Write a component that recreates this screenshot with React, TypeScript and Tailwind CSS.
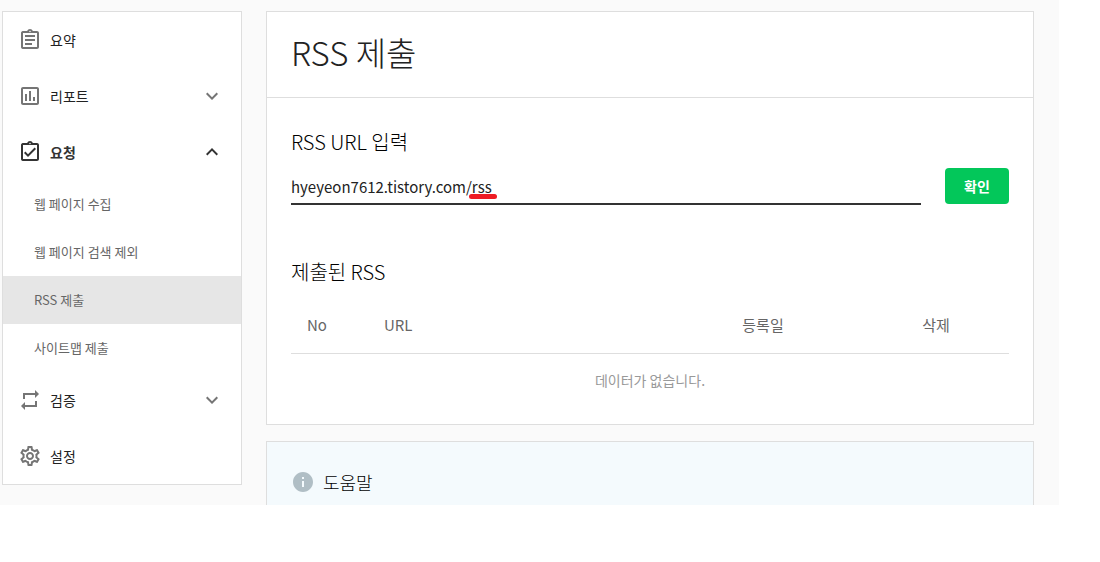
import { useState } from "react";
import type { IconType } from "react-icons";
import {
  MdExpandLess,
  MdExpandMore,
  MdInfo,
  MdOutlineAssessment,
  MdOutlineAssignment,
  MdOutlineAssignmentTurnedIn,
  MdOutlineSettings,
  MdRepeat,
} from "react-icons/md";

type MenuItem = {
  label: string;
  icon: IconType;
  children?: string[];
  expandable?: boolean;
};

const menu: MenuItem[] = [
  { label: "요약", icon: MdOutlineAssignment },
  { label: "리포트", icon: MdOutlineAssessment, expandable: true },
  {
    label: "요청",
    icon: MdOutlineAssignmentTurnedIn,
    expandable: true,
    children: ["웹 페이지 수집", "웹 페이지 검색 제외", "RSS 제출", "사이트맵 제출"],
  },
  { label: "검증", icon: MdRepeat, expandable: true },
  { label: "설정", icon: MdOutlineSettings },
];

const Sidebar = () => {
  const [open, setOpen] = useState("요청");
  const current = "RSS 제출";

  return (
    <nav className="w-60 shrink-0 self-start border border-[#dedede] bg-white">
      <ul>
        {menu.map(({ label, icon: Icon, children, expandable }) => {
          const isOpen = expandable && open === label;
          const rowClass = `flex h-14 w-full items-center gap-2 pl-[15px] pr-[17px] pb-px text-left text-sm ${
            isOpen ? "font-bold text-[#333]" : "text-[#222]"
          }`;
          const iconClass = `size-6 ${isOpen ? "text-[#333]" : "text-[#757575]"}`;

          return (
            <li key={label}>
              {expandable ? (
                <button
                  type="button"
                  className={rowClass}
                  aria-expanded={isOpen}
                  onClick={() => setOpen(isOpen ? "" : label)}
                >
                  <Icon className={iconClass} />
                  <span className="flex-1">{label}</span>
                  {isOpen ? (
                    <MdExpandLess className={iconClass} />
                  ) : (
                    <MdExpandMore className={iconClass} />
                  )}
                </button>
              ) : (
                <a href="#" className={rowClass}>
                  <Icon className={iconClass} />
                  <span>{label}</span>
                </a>
              )}

              {isOpen && children && (
                <ul>
                  {children.map((child) => (
                    <li key={child}>
                      <a
                        href="#"
                        className={`flex h-12 items-center pb-px pl-[31px] text-[13px] text-[#666] ${
                          child === current ? "bg-[#e6e6e6]" : ""
                        }`}
                      >
                        {child}
                      </a>
                    </li>
                  ))}
                </ul>
              )}
            </li>
          );
        })}
      </ul>
    </nav>
  );
};

const App = () => {
  const [url, setUrl] = useState("hyeyeon7612.tistory.com/rss");

  return (
    <div className="bg-white font-['Noto_Sans_CJK_KR',sans-serif] text-[#222]">
      <div className="mr-[41px] flex gap-6 bg-[#fafafa] pl-0.5 pr-[25px] pt-[11px]">
        <Sidebar />

        <main className="min-w-0 flex-1">
          <section className="border border-[#dedede] bg-white">
            <h1 className="border-b border-[#dedede] px-6 pt-5 pb-6 text-[33px] leading-[41px] font-light">
              RSS 제출
            </h1>

            <div className="px-6 pt-8 pb-[18px]">
              <form onSubmit={(e) => e.preventDefault()}>
                <label htmlFor="rss-url" className="block text-xl leading-6 font-light text-black">
                  RSS URL 입력
                </label>
                <div className="mt-[14px] flex items-end gap-6">
                  <div className="relative flex-1">
                    <input
                      id="rss-url"
                      type="text"
                      value={url}
                      onChange={(e) => setUrl(e.target.value)}
                      className="block h-[37px] w-full border-b-2 border-[#333] pt-0.5 text-[15px] outline-none"
                    />
                    <span className="absolute bottom-1.5 left-[178px] h-[5px] w-7 rounded-full bg-[#ee1c24]" />
                  </div>
                  <button
                    type="submit"
                    className="mb-px h-9 w-16 rounded bg-[#03c75a] text-sm font-bold text-white"
                  >
                    확인
                  </button>
                </div>
              </form>

              <h2 className="mt-[55px] text-xl leading-6 font-light text-black">제출된 RSS</h2>
              <table className="mt-3 w-full table-fixed text-sm">
                <thead>
                  <tr className="h-[57px] border-b border-[#dedede] text-[15px] text-[#666]">
                    <th className="w-[77px] pl-4 text-left font-normal">No</th>
                    <th className="pl-4 text-left font-normal">URL</th>
                    <th className="w-[200px] text-center font-normal">등록일</th>
                    <th className="w-[146px] text-center font-normal">삭제</th>
                  </tr>
                </thead>
                <tbody>
                  <tr className="h-[53px]">
                    <td colSpan={4} className="text-center text-[#999]">
                      데이터가 없습니다.
                    </td>
                  </tr>
                </tbody>
              </table>
            </div>
          </section>

          <section className="mt-4 border border-b-0 border-[#dedede] bg-[#f4fafd] px-6 pt-7 pb-[11px]">
            <h2 className="flex items-center gap-2 text-lg leading-6 font-light text-black">
              <MdInfo className="size-6 text-[#b0bec5]" />
              도움말
            </h2>
          </section>
        </main>
      </div>
    </div>
  );
};

export default App;
